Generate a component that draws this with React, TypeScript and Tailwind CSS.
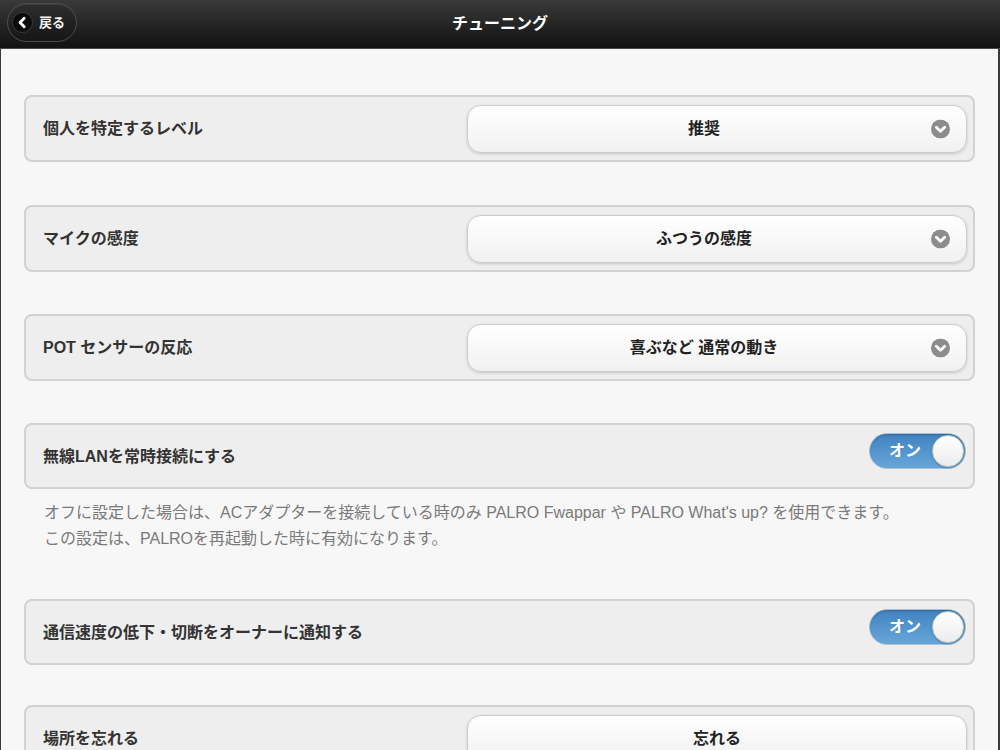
import React from "react";

const font = { fontFamily: '"Liberation Sans", "Noto Sans CJK JP", sans-serif' };

function ChevronCircle() {
  return (
    <svg width="19" height="19" viewBox="0 0 20 20">
      <circle cx="10" cy="10" r="10" fill="#8c8c8c" />
      <path d="M5.6 8.2 L10 12.4 L14.4 8.2" fill="none" stroke="#fff" strokeWidth="3" strokeLinecap="round" strokeLinejoin="round" />
    </svg>
  );
}

function SelectBox({ value, plain }: { value: string; plain?: boolean }) {
  return (
    <div
      className={
        plain
          ? "relative flex h-[48px] w-[500px] shrink-0 items-center justify-center rounded-[14px] border border-[#cdcdcd] bg-gradient-to-b from-[#ffffff] to-[#f1f1f1] shadow-[0_1px_3px_rgba(0,0,0,0.18)]"
          : "relative flex h-[48px] w-[500px] shrink-0 items-center justify-center rounded-[14px] border border-[#cdcdcd] bg-gradient-to-b from-[#ffffff] to-[#f1f1f1] pr-[26px] shadow-[0_1px_3px_rgba(0,0,0,0.18)]"
      }
    >
      <span className="text-[16px] font-bold text-[#222]">{value}</span>
      {!plain && (
        <span className="absolute right-[16px] top-1/2 -translate-y-1/2 flex">
          <ChevronCircle />
        </span>
      )}
    </div>
  );
}

function Toggle() {
  return (
    <div className="flex h-[36px] w-[97px] items-center justify-between rounded-full border border-[#a9bfd3] bg-gradient-to-b from-[#3f83c0] to-[#68a6d8] pl-[19px] pr-[1px] shadow-[inset_0_1px_2px_rgba(0,0,0,0.2)]">
      <span className="text-[16px] font-bold text-white">オン</span>
      <span className="h-[32px] w-[32px] rounded-full border border-[#c9c9c9] bg-gradient-to-b from-[#ffffff] to-[#ececec] shadow-[0_1px_2px_rgba(0,0,0,0.25)]" />
    </div>
  );
}

function SelectRow({ label, value, plain }: { label: string; value: string; plain?: boolean }) {
  return (
    <div className="flex h-[67px] items-center justify-between rounded-[8px] border-2 border-[#d2d2d2] bg-[#eeeeee] pl-[17px] pr-[6px]">
      <span className="text-[16px] font-bold text-[#333]">{label}</span>
      <SelectBox value={value} plain={plain} />
    </div>
  );
}

function ToggleRow({ label }: { label: string }) {
  return (
    <div className="flex h-[66px] justify-between rounded-[8px] border-2 border-[#d2d2d2] bg-[#eeeeee] pl-[17px] pr-[7px]">
      <span className="mt-[20px] text-[16px] font-bold text-[#333]">{label}</span>
      <div className="mt-[8px]">
        <Toggle />
      </div>
    </div>
  );
}

export default function App() {
  return (
    <div className="h-[750px] overflow-hidden bg-[#f7f7f7]" style={font}>
      {/* top bar */}
      <div className="relative flex h-[49px] items-center justify-center border-b border-[#4a4a4a] bg-gradient-to-b from-[#3a3a3a] to-[#121212]">
        <button className="absolute left-[7px] top-[3px] flex h-[39px] items-center gap-[6px] rounded-full border border-[#4d4d4d] bg-gradient-to-b from-[#2e2e2e] to-[#161616] pl-[4px] pr-[11px] shadow-[inset_0_1px_0_rgba(255,255,255,0.08)]">
          <svg width="21" height="21" viewBox="0 0 22 22">
            <circle cx="11" cy="11" r="10.5" fill="#0b0b0b" stroke="#3c3c3c" strokeWidth="1" />
            <path d="M12.8 6.5 L8.4 11 L12.8 15.5" fill="none" stroke="#fff" strokeWidth="3" strokeLinecap="round" strokeLinejoin="round" />
          </svg>
          <span className="text-[13px] font-bold text-[#f2f2f2]">戻る</span>
        </button>
        <h1 className="text-[16px] font-bold text-white">チューニング</h1>
      </div>

      {/* content */}
      <div className="h-full border-l border-r-2 border-l-[#3a3a3a] border-r-[#3a3a3a] pl-[23px] pr-[23px] pt-[46px]">
        <div className="flex flex-col">
          <SelectRow label="個人を特定するレベル" value="推奨" />
          <div className="mt-[43px]">
            <SelectRow label="マイクの感度" value="ふつうの感度" />
          </div>
          <div className="mt-[42px]">
            <SelectRow label="POT センサーの反応" value="喜ぶなど 通常の動き" />
          </div>
          <div className="mt-[42px]">
            <ToggleRow label="無線LANを常時接続にする" />
          </div>
          <div className="mt-[11px] pl-[20px] text-[16px] leading-[26px] text-[#7a7a7a]">
            <p>オフに設定した場合は、ACアダプターを接続している時のみ PALRO Fwappar や PALRO What's up? を使用できます。</p>
            <p>この設定は、PALROを再起動した時に有効になります。</p>
          </div>
          <div className="mt-[47px]">
            <ToggleRow label="通信速度の低下・切断をオーナーに通知する" />
          </div>
          <div className="mt-[40px]">
            <SelectRow label="場所を忘れる" value="忘れる" plain />
          </div>
        </div>
      </div>
    </div>
  );
}
